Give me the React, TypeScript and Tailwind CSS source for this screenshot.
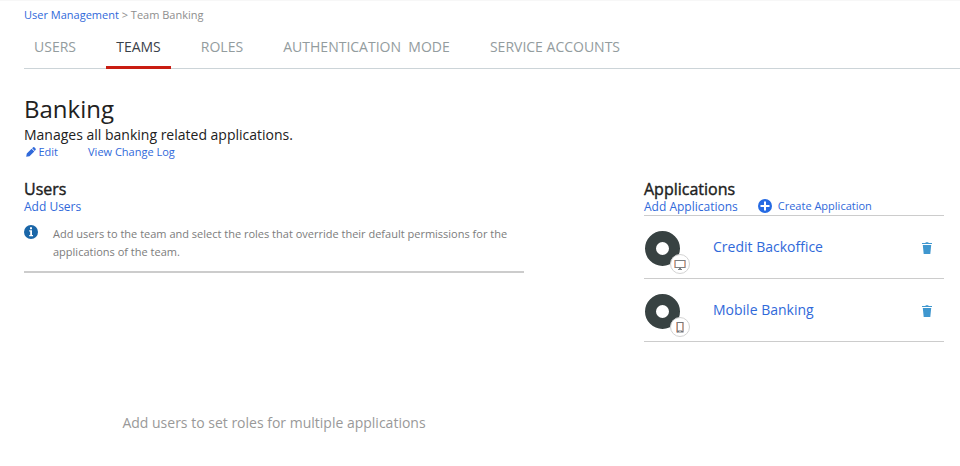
import type { ReactNode } from "react";

const tabs = [
  { label: "USERS", box: "w-[62px]" },
  { label: "TEAMS", box: "w-[65px]" },
  { label: "ROLES", box: "w-[62px]" },
  { label: "AUTHENTICATION\u00a0 MODE", box: "w-[187px]" },
  { label: "SERVICE ACCOUNTS", box: "w-[150px]" },
];

function PencilIcon() {
  return (
    <svg className="h-[10px] w-[10px]" viewBox="0 0 10 10" fill="currentColor">
      <path d="M0.2 9.8 .8 6.5 5.6 1.7 8.3 4.4 3.5 9.2ZM6.1 1.2 7.2.3Q8 -.2 8.6.5L9.5 1.4Q10.2 2.1 9.6 2.8L8.8 3.9Z" />
    </svg>
  );
}

function InfoIcon() {
  return (
    <svg className="h-[14px] w-[14px]" viewBox="0 0 14 14">
      <circle cx="7" cy="7" r="7" fill="#1a66a8" />
      <path d="M6 2.2H8V4.2H6ZM5.2 5.2H8V10H9V11.2H5.2V10H6.2V6.4H5.2Z" fill="white" />
    </svg>
  );
}

function PlusIcon() {
  return (
    <svg className="h-[14px] w-[14px]" viewBox="0 0 14 14">
      <circle cx="7" cy="7" r="7" fill="#256ae3" />
      <path d="M6 2.5H8V6H11.5V8H8V11.5H6V8H2.5V6H6Z" fill="white" />
    </svg>
  );
}

function TrashIcon() {
  return (
    <svg className="h-3 w-[10px]" viewBox="0 0 10 12" fill="#3f97cf">
      <path d="M0 1H3.6V.2H6.4V1H10V2H0ZM.8 3H9.2L8.3 12H1.7Z" />
    </svg>
  );
}

function MonitorIcon() {
  return (
    <svg className="h-3 w-3 shrink-0" viewBox="0 0 12 12" fill="none">
      <path d="M1 2.5H11M1 9.5H11M4 11.5H8" stroke="#7d8084" />
      <path d="M6 9.5V11.5" stroke="#7d8084" strokeWidth="2" />
      <path d="M.5 2V10M10.5 3V9" stroke="#efaa7d" />
      <path d="M1.5 3V9M11.5 2V10" stroke="#8b98b5" strokeWidth="0.8" />
    </svg>
  );
}

function PhoneIcon() {
  return (
    <svg className="h-3 w-3 shrink-0" viewBox="0 0 12 12" fill="none">
      <path d="M3 1.5H9" stroke="#73767b" />
      <path d="M3 10.5H9" stroke="#73767b" strokeWidth="2" />
      <path d="M2.5 1V11.5M8.5 2V9.5" stroke="#efaa7d" />
      <path d="M3.5 1V11.5M9.3 1V11.5" stroke="#737b91" strokeWidth="0.8" />
      <path d="M5.5 10.5H6.5" stroke="white" />
    </svg>
  );
}

function ApplicationRow({ name, badge }: { name: string; badge: ReactNode }) {
  return (
    <li className="flex h-[63px] items-start border-b border-[#cccccc]">
      <div className="relative ml-px mt-[15px] h-[35px] w-[35px] shrink-0 rounded-full border-[11px] border-[#384242]">
        <span className="absolute left-[14px] top-[12px] flex h-5 w-5 items-center justify-center rounded-full border border-[#d3d3d3] bg-white">
          {badge}
        </span>
      </div>
      <a className="ml-[33px] mt-[21px] text-[14px] leading-5 text-[#3069da]">{name}</a>
      <button className="ml-auto mr-3 mt-[26px]" aria-label="Remove">
        <TrashIcon />
      </button>
    </li>
  );
}

export default function App() {
  return (
    <div className="h-[466px] w-[960px] overflow-hidden border-t border-[#f7f7f7] bg-white pl-6 font-['Open_Sans',sans-serif] text-[#212121]">
      <nav className="mt-[6px] h-4 whitespace-pre text-[11px] leading-4 text-[#8e8e8e]">
        <a className="text-[#3069da]">User Management</a> &gt; Team Banking
      </nav>
      <div className="mt-[5px] flex h-[41px] gap-5 border-b border-[#ccd4d8]">
        {tabs.map((tab) => (
          <a
            key={tab.label}
            className={`${tab.box} h-[41px] shrink-0 whitespace-nowrap pt-[9px] text-center text-[14px] leading-5 ${
              tab.label === "TEAMS" ? "border-b-[3px] border-[#c91d12] text-[#3a4149]" : "text-[#939c9e]"
            }`}
          >
            {tab.label}
          </a>
        ))}
      </div>
      <header>
        <h1 className="mt-[24px] h-8 text-[24px] leading-8">Banking</h1>
        <p className="h-5 text-[14px] leading-5">Manages all banking related applications.</p>
        <div className="flex h-[13px] items-center text-[11px] leading-[13px] text-[#3069da]">
          <span className="ml-[2px] mr-[2.5px]"><PencilIcon /></span>
          <a>Edit</a>
          <a className="ml-[30px]">View Change Log</a>
        </div>
      </header>
      <main className="mt-[22px] flex gap-[120px]">
        <section className="w-[500px]">
          <h2 className="h-[18px] text-[16px] leading-[18px] [-webkit-text-stroke:0.4px]">Users</h2>
          <a className="block h-4 text-[12px] leading-[18px] text-[#3069da]">Add Users</a>
          <div className="mt-[11px] flex h-[48px] border-b-2 border-[#cccccc]">
            <InfoIcon />
            <p className="ml-[15px] text-[11px] leading-[18px] text-[#7c7c7c]">
              Add users to the team and select the roles that override their default permissions for the
              <br />
              applications of the team.
            </p>
          </div>
          <p className="mt-[140px] text-center text-[14px] leading-5 text-[#999999]">
            Add users to set roles for multiple applications
          </p>
        </section>
        <section className="w-[300px]">
          <h2 className="h-[18px] text-[16px] leading-[18px] [-webkit-text-stroke:0.4px]">Applications</h2>
          <div className="flex h-[18px] border-b border-[#cccccc] text-[12px] leading-[18px] text-[#3069da]">
            <a>Add Applications</a>
            <a className="ml-5 flex text-[11px] leading-4">
              <span className="mr-[6px] pt-px"><PlusIcon /></span>
              Create Application
            </a>
          </div>
          <ul>
            <ApplicationRow name="Credit Backoffice" badge={<MonitorIcon />} />
            <ApplicationRow name="Mobile Banking" badge={<PhoneIcon />} />
          </ul>
        </section>
      </main>
    </div>
  );
}
